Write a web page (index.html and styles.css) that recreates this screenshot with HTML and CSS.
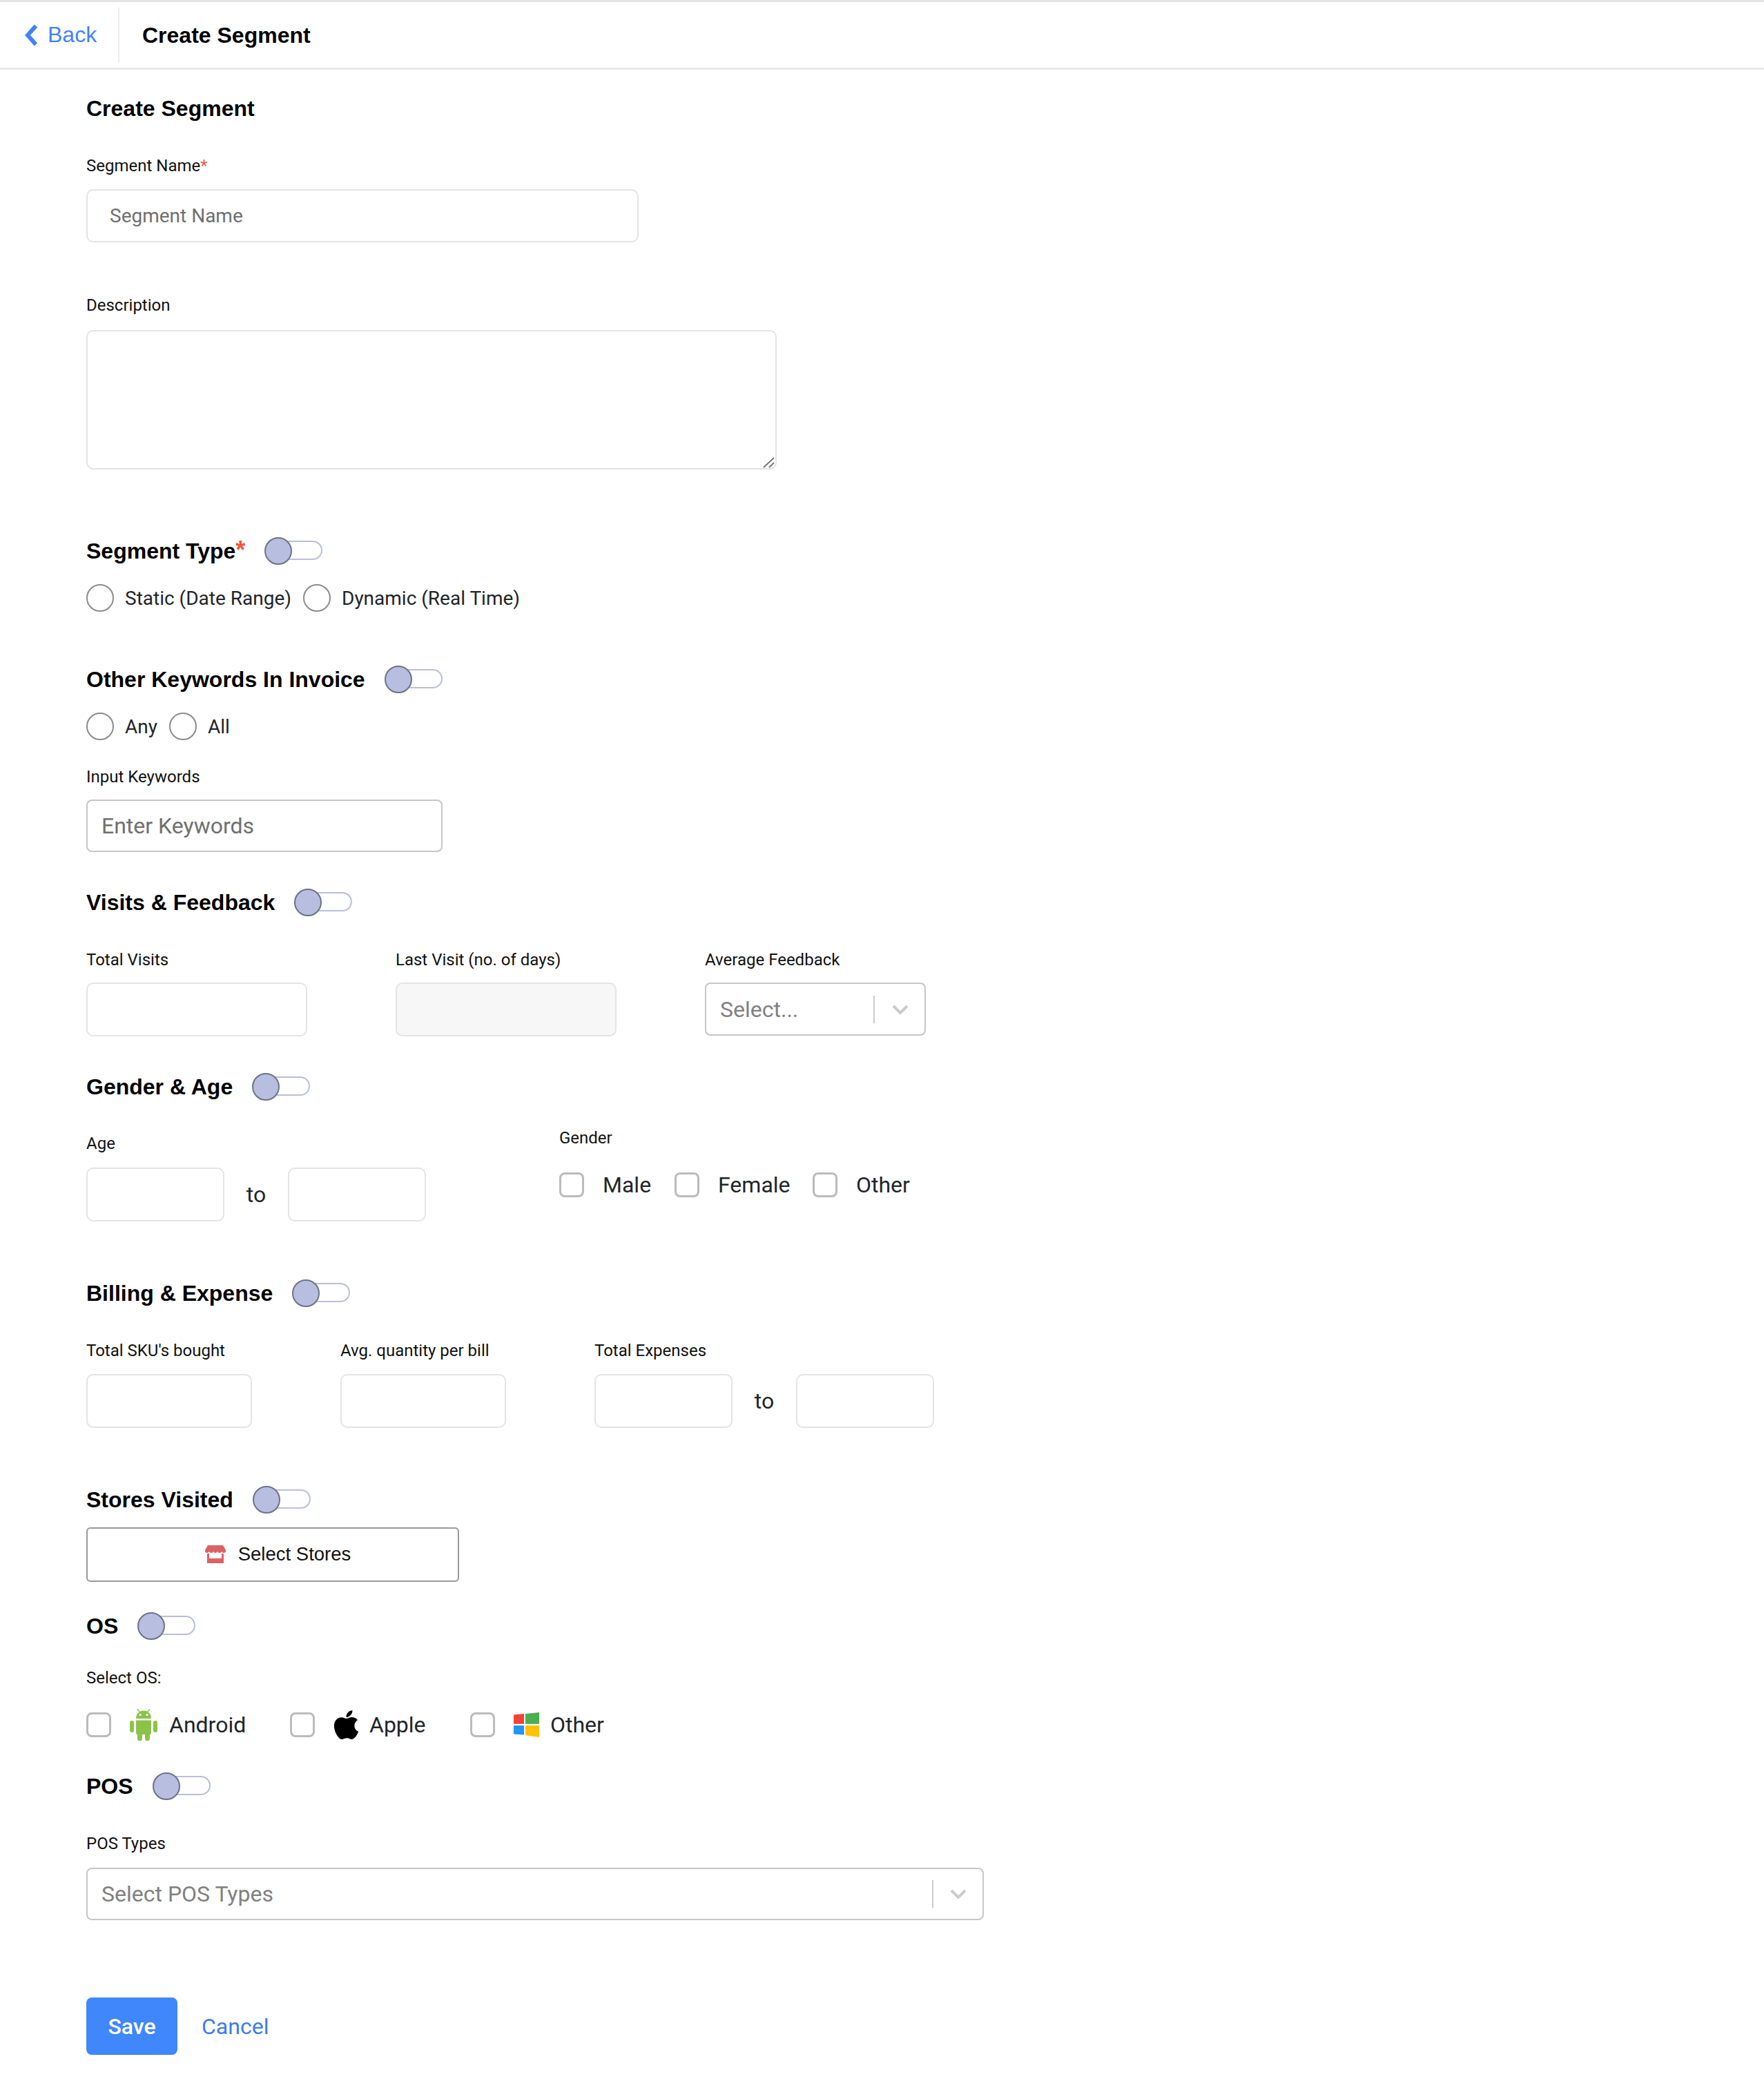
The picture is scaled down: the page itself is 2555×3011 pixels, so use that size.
FILE: index.html
```html
<!DOCTYPE html>
<html lang="en">

<head>
    <meta charset="UTF-8">
    <title>Create Segment</title>
    <link rel="stylesheet" href="styles.css">
</head>

<body>
    <header class="topbar">
        <a class="back-link">
            <svg class="back-icon" viewBox="0 0 20 32"><path d="M17 2.500 5 16l12 13.500" /></svg>
            Back
        </a>
        <div class="topbar-title">Create Segment</div>
    </header>

    <main class="page">
        <h1 class="page-title">Create Segment</h1>

        <label class="field-label name-label">Segment Name<span class="required">*</span></label>
        <input class="text-input name-input" type="text" placeholder="Segment Name">

        <label class="field-label description-label">Description</label>
        <div class="description-wrap">
            <textarea class="description-input"></textarea>
            <svg class="resize-grip" viewBox="0 0 18 16"><path d="M1 15 16 1M9 15l7-7" /></svg>
        </div>

        <div class="section-head type-head">
            <h2>Segment Type<span class="required">*</span></h2>
            <span class="toggle"></span>
        </div>
        <div class="radio-row">
            <label class="radio-item"><span class="radio"></span>Static (Date Range)</label>
            <label class="radio-item"><span class="radio"></span>Dynamic (Real Time)</label>
        </div>

        <div class="section-head keywords-head">
            <h2>Other Keywords In Invoice</h2>
            <span class="toggle"></span>
        </div>
        <div class="radio-row">
            <label class="radio-item"><span class="radio"></span>Any</label>
            <label class="radio-item"><span class="radio"></span>All</label>
        </div>
        <label class="field-label keywords-label">Input Keywords</label>
        <input class="text-input keywords-input" type="text" placeholder="Enter Keywords">

        <div class="section-head visits-head">
            <h2>Visits &amp; Feedback</h2>
            <span class="toggle"></span>
        </div>
        <div class="visits-row">
            <div class="col-visits">
                <label class="field-label">Total Visits</label>
                <div class="box"></div>
            </div>
            <div class="col-visits">
                <label class="field-label">Last Visit (no. of days)</label>
                <div class="box box-disabled"></div>
            </div>
            <div class="col-feedback">
                <label class="field-label">Average Feedback</label>
                <div class="select">
                    <span class="select-text">Select...</span>
                    <span class="select-sep"></span>
                    <svg class="select-arrow" viewBox="0 0 24 16"><path d="M2 3l10 10L22 3" /></svg>
                </div>
            </div>
        </div>

        <div class="section-head gender-head">
            <h2>Gender &amp; Age</h2>
            <span class="toggle"></span>
        </div>
        <div class="age-gender-row">
            <div class="age-col">
                <label class="field-label">Age</label>
                <div class="range">
                    <div class="box box-range"></div>
                    <span class="range-to">to</span>
                    <div class="box box-range"></div>
                </div>
            </div>
            <div class="gender-col">
                <label class="field-label">Gender</label>
                <div class="gender-options">
                    <label class="check-item male"><span class="checkbox"></span>Male</label>
                    <label class="check-item female"><span class="checkbox"></span>Female</label>
                    <label class="check-item"><span class="checkbox"></span>Other</label>
                </div>
            </div>
        </div>

        <div class="section-head billing-head">
            <h2>Billing &amp; Expense</h2>
            <span class="toggle"></span>
        </div>
        <div class="billing-row">
            <div class="col-billing">
                <label class="field-label">Total SKU's bought</label>
                <div class="box"></div>
            </div>
            <div class="col-billing">
                <label class="field-label">Avg. quantity per bill</label>
                <div class="box"></div>
            </div>
            <div>
                <label class="field-label">Total Expenses</label>
                <div class="range">
                    <div class="box box-range"></div>
                    <span class="range-to">to</span>
                    <div class="box box-range"></div>
                </div>
            </div>
        </div>

        <div class="section-head stores-head">
            <h2>Stores Visited</h2>
            <span class="toggle"></span>
        </div>
        <button class="stores-btn" type="button">
            <svg class="store-icon" viewBox="0 0 30 26">
                <path d="M4 0h22l4 7v1a3 3 0 0 1-6 0 3 3 0 0 1-6 0 3 3 0 0 1-6 0 3 3 0 0 1-6 0 3 3 0 0 1-6 0V7z" />
                <path d="M3 12h3v7h18v-7h3v14H3z" />
            </svg>
            Select Stores
        </button>

        <div class="section-head os-head">
            <h2>OS</h2>
            <span class="toggle"></span>
        </div>
        <label class="field-label select-os-label">Select OS:</label>
        <div class="os-row">
            <label class="os-item android">
                <span class="checkbox"></span>
                <svg class="os-icon android-icon" viewBox="0 0 40 46">
                    <path fill="none" stroke="#8bc34a" stroke-width="1.500" d="M11 0l3 4M29 0l-3 4" />
                    <path d="M9 14C9 7 14 2.500 20 2.500S31 7 31 14z" />
                    <circle cx="15" cy="8.500" r="1.500" fill="#fff" />
                    <circle cx="25" cy="8.500" r="1.500" fill="#fff" />
                    <path d="M9 16.500h22V35a2 2 0 0 1-2 2v6a3.500 3.500 0 0 1-7 0v-6h-4v6a3.500 3.500 0 0 1-7 0v-6a2 2 0 0 1-2-2z" />
                    <rect x="0" y="17" width="6" height="17" rx="3" />
                    <rect x="34" y="17" width="6" height="17" rx="3" />
                </svg>
                Android
            </label>
            <label class="os-item apple">
                <span class="checkbox"></span>
                <svg class="os-icon apple-icon" viewBox="0 0 384 512">
                    <path d="M318.700 268.700c-.2-36.700 16.400-64.400 50-84.800-18.800-26.900-47.200-41.700-84.700-44.600-35.500-2.800-74.300 20.700-88.500 20.700-15 0-49.400-19.700-76.400-19.700C63.300 141.200 4 184.800 4 273.500q0 39.300 14.400 81.200c12.800 36.700 59 126.700 107.200 125.200 25.200-.6 43-17.900 75.800-17.900 31.800 0 48.300 17.900 76.400 17.900 48.600-.7 90.400-82.500 102.600-119.300-65.200-30.700-61.700-90-61.700-91.900zm-56.600-164.200c27.300-32.400 24.800-61.900 24-72.500-24.100 1.400-52 16.400-67.900 34.900-17.500 19.800-27.800 44.300-25.600 71.900 26.100 2 49.900-11.400 69.500-34.300z" />
                </svg>
                Apple
            </label>
            <label class="os-item windows">
                <span class="checkbox"></span>
                <svg class="os-icon windows-icon" viewBox="0 0 37 36">
                    <path fill="#f44336" d="M0 3.500 15 2v14.700H0z" />
                    <path fill="#4caf50" d="M17 2 37 0v16.700H17z" />
                    <path fill="#2196f3" d="M0 19h15v13.500L0 31.500z" />
                    <path fill="#ffc107" d="M17 19h20v17l-20-3z" />
                </svg>
                Other
            </label>
        </div>

        <div class="section-head pos-head">
            <h2>POS</h2>
            <span class="toggle"></span>
        </div>
        <label class="field-label pos-label">POS Types</label>
        <div class="select select-wide">
            <span class="select-text">Select POS Types</span>
            <span class="select-sep"></span>
            <svg class="select-arrow" viewBox="0 0 24 16"><path d="M2 3l10 10L22 3" /></svg>
        </div>

        <div class="actions">
            <button class="save-btn" type="button">Save</button>
            <a class="cancel-link">Cancel</a>
        </div>
    </main>
</body>

</html>
```
FILE: styles.css
```css
* {
    box-sizing: border-box;
}

body {
    margin: 0;
    font-family: Roboto, "Liberation Sans", sans-serif;
    color: #212529;
    background-color: #fff;
}

.topbar {
    display: flex;
    align-items: center;
    height: 101px;
    border-top: 3px solid #e3e3e3;
    border-bottom: 3px solid #e8e8e8;
}

.back-link {
    display: flex;
    align-items: center;
    gap: 14px;
    width: 173px;
    height: 80px;
    padding-left: 35px;
    border-right: 2px solid #ececec;
    font-family: "Liberation Sans", sans-serif;
    font-size: 32px;
    color: #3f83f8;
}

.back-icon {
    width: 20px;
    height: 32px;
    fill: none;
    stroke: #3f83f8;
    stroke-width: 6;
}

.topbar-title {
    margin-left: 33px;
    padding-top: 2px;
    font-family: "Liberation Sans", sans-serif;
    font-size: 32px;
    font-weight: 700;
    color: #000;
}

.page {
    padding-left: 125px;
}

.page-title {
    margin: 35px 0 0;
    height: 40px;
    padding-top: 1px;
    line-height: 40px;
    font-family: "Liberation Sans", sans-serif;
    font-size: 32px;
    font-weight: 700;
    color: #000;
}

.field-label {
    display: block;
    height: 30px;
    margin-bottom: 19px;
    padding-top: 1px;
    line-height: 30px;
    font-size: 24px;
    color: #111;
}

.required {
    color: #f4553b;
}

.section-head .required {
    font-size: 36px;
    line-height: 30px;
}

.name-label {
    margin-top: 49px;
    padding-top: 0;
}

.description-label {
    margin-top: 76px;
    margin-bottom: 21px;
    padding-top: 0;
}

.keywords-label {
    margin-top: 37px;
}

.select-os-label {
    margin-top: 40px;
    margin-bottom: 24px;
}

.pos-label {
    margin-top: 48px;
    margin-bottom: 21px;
}

.text-input {
    display: block;
    font-family: Roboto, sans-serif;
    outline: none;
    background: #fff;
}

.text-input::placeholder {
    color: #6f6f6f;
    opacity: 1;
}

.name-input {
    width: 800px;
    height: 77px;
    padding: 0 32px;
    font-size: 28px;
    border: 2px solid #e4e4e4;
    border-radius: 10px;
}

.keywords-input {
    width: 516px;
    height: 76px;
    padding: 0 20px;
    font-size: 32px;
    border: 2px solid #c6c6c6;
    border-radius: 8px;
}

.description-wrap {
    position: relative;
    width: 1000px;
}

.description-input {
    display: block;
    width: 1000px;
    height: 202px;
    border: 2px solid #e4e4e4;
    border-radius: 10px;
    outline: none;
    resize: none;
}

.resize-grip {
    position: absolute;
    right: 2px;
    bottom: 2px;
    width: 18px;
    height: 16px;
    fill: none;
    stroke: #777;
    stroke-width: 2;
}

.section-head {
    display: flex;
    align-items: center;
    gap: 30px;
    height: 40px;
}

.section-head h2 {
    margin: 0;
    padding-top: 3px;
    font-family: "Liberation Sans", sans-serif;
    font-size: 32px;
    font-weight: 700;
    color: #000;
}

.type-head {
    margin-top: 97px;
}

.keywords-head {
    margin-top: 77px;
}

.visits-head {
    margin-top: 52px;
}

.gender-head {
    margin-top: 52px;
}

.billing-head {
    margin-top: 83px;
}

.stores-head {
    margin-top: 83px;
}

.os-head {
    margin-top: 43px;
}

.pos-head {
    margin-top: 38px;
}

.toggle {
    position: relative;
    display: block;
    width: 82px;
    height: 28px;
    border: 2px solid #b9bedc;
    border-radius: 14px;
    background: #fff;
}

.toggle::before {
    content: "";
    position: absolute;
    left: -4px;
    top: -7px;
    width: 36px;
    height: 36px;
    border: 2px solid #6d7285;
    border-radius: 50%;
    background: #b7bee0;
}

.radio-row {
    display: flex;
    gap: 17px;
    height: 40px;
    margin-top: 29px;
}

.radio-item {
    display: flex;
    align-items: center;
    gap: 16px;
    font-size: 28px;
}

.radio {
    width: 40px;
    height: 40px;
    border: 2px solid #8b8b8b;
    border-radius: 50%;
}

.box {
    height: 78px;
    border: 2px solid #e4e4e4;
    border-radius: 10px;
}

.box-disabled {
    background: #f7f7f7;
}

.visits-row {
    display: flex;
    margin-top: 48px;
}

.col-visits {
    width: 320px;
    margin-right: 128px;
}

.col-feedback {
    width: 320px;
}

.select {
    display: flex;
    align-items: center;
    height: 77px;
    padding-left: 20px;
    border: 2px solid #c6c6c6;
    border-radius: 8px;
}

.select-text {
    flex: 1;
    font-size: 32px;
    color: #808080;
}

.select-sep {
    width: 2px;
    height: 40px;
    background: #cbcbcb;
}

.select-arrow {
    width: 24px;
    height: 16px;
    margin: 0 23px 0 25px;
    fill: none;
    stroke: #cbcbcb;
    stroke-width: 4;
}

.select-wide {
    width: 1300px;
    height: 76px;
}

.select-wide .select-arrow {
    margin: 0 23px 0 24px;
}

.age-gender-row {
    display: flex;
    margin-top: 47px;
}

.age-col {
    width: 685px;
}

.age-col .field-label {
    margin-bottom: 21px;
}

.gender-col {
    margin-top: -8px;
}

.range {
    display: flex;
    align-items: center;
}

.box-range {
    width: 200px;
}

.range-to {
    width: 92px;
    text-align: center;
    font-size: 32px;
}

.gender-options {
    display: flex;
    align-items: center;
    height: 40px;
    margin-top: 34px;
}

.check-item {
    display: flex;
    align-items: center;
    gap: 27px;
    font-size: 32px;
}

.male {
    width: 167px;
}

.female {
    width: 200px;
}

.checkbox {
    flex: none;
    width: 36px;
    height: 36px;
    border: 3px solid #bbb;
    border-radius: 8px;
}

.billing-row {
    display: flex;
    margin-top: 48px;
}

.billing-row .field-label {
    margin-bottom: 20px;
}

.col-billing {
    width: 240px;
    margin-right: 128px;
}

.stores-btn {
    display: flex;
    align-items: center;
    justify-content: center;
    gap: 18px;
    width: 540px;
    height: 79px;
    margin-top: 21px;
    padding: 0 0 2px 15px;
    border: 2px solid #999;
    border-radius: 6px;
    background: #fff;
    font-family: "Liberation Sans", sans-serif;
    font-size: 27.500px;
    color: #111;
}

.store-icon {
    width: 30px;
    height: 26px;
    fill: #dc6165;
}

.os-row {
    display: flex;
    align-items: center;
    height: 60px;
}

.os-item {
    display: flex;
    align-items: center;
    font-size: 32px;
}

.os-item .checkbox {
    margin-right: 27px;
}

.android {
    width: 295px;
}

.apple {
    width: 261px;
}

.android-icon {
    width: 40px;
    height: 46px;
    margin-right: 17px;
    fill: #8bc34a;
}

.apple-icon {
    width: 37px;
    height: 48px;
    margin-right: 15px;
    fill: #000;
}

.windows-icon {
    width: 37px;
    height: 36px;
    margin-right: 16px;
}

.actions {
    display: flex;
    align-items: center;
    gap: 35px;
    margin-top: 112px;
    padding-bottom: 35px;
}

.save-btn {
    width: 132px;
    height: 83px;
    border: none;
    border-radius: 8px;
    background: #3f87fb;
    font-family: Roboto, sans-serif;
    font-size: 32px;
    font-weight: 500;
    color: #fff;
}

.cancel-link {
    font-size: 32px;
    color: #3b7cf0;
}
```
